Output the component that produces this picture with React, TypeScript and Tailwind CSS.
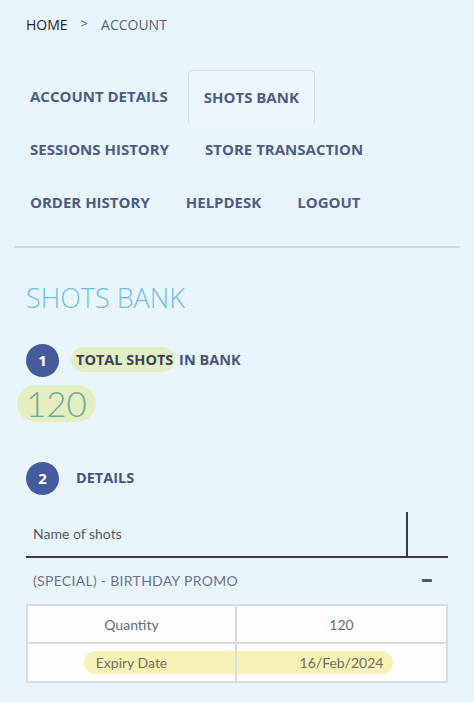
import React from 'react';

const tabs = [
  'ACCOUNT DETAILS',
  'SHOTS BANK',
  'SESSIONS HISTORY',
  'STORE TRANSACTION',
  'ORDER HISTORY',
  'HELPDESK',
  'LOGOUT',
];

const sans = { fontFamily: '"Open Sans", "Noto Sans", sans-serif' };
const geo = { fontFamily: 'Lato, "Noto Sans", sans-serif' };

function Step({ n, children }: { n: number; children: React.ReactNode }) {
  return (
    <div className="flex items-center h-[34px]">
      <div className="w-[33px] h-[33px] rounded-full bg-[#455c9c] text-white flex items-center justify-center text-[15px] font-bold">
        {n}
      </div>
      <div className="ml-[17px] text-[14.5px] font-bold text-[#46557f]">{children}</div>
    </div>
  );
}

export default function App() {
  return (
    <div className="min-h-[702px] w-[474px] bg-[#e9f5fc]" style={sans}>
      {/* breadcrumb */}
      <div className="flex items-center h-[48px] pl-[26px] text-[14px]">
        <span className="text-[#1f2329]">HOME</span>
        <span className="mx-[13px] text-[#55617f] text-[13px]">&gt;</span>
        <span className="text-[#55617f]">ACCOUNT</span>
      </div>

      {/* tabs */}
      <div className="mt-[22px] pl-[14px] pr-[14px] flex flex-wrap">
        {tabs.map((t) => (
          <div
            key={t}
            className={
              'h-[53px] px-[15px] mr-[4px] flex items-center text-[15px] font-bold text-[#4e5c86] whitespace-nowrap ' +
              (t === 'SHOTS BANK' ? 'border border-b-0 border-[#d3dbe2] rounded-t-[5px] bg-[#ecf7fd]' : 'border border-transparent')
            }
          >
            {t}
          </div>
        ))}
      </div>
      <div className="mx-[14px] mt-[17px] border-t-2 border-[#d2dbe3]" />

      {/* heading */}
      <div className="pl-[26px] mt-[32px] text-[27px] font-light text-[#72bde6] leading-[36px]">SHOTS BANK</div>

      <div className="pl-[26px] mt-[27px]">
        <Step n={1}>
          <span className="bg-[#e4eec4] rounded-full py-[3px] pl-[5px] pr-[2px] -ml-[5px] text-[#3c4356]">TOTAL SHOTS</span> IN BANK
        </Step>
      </div>
      <div className="pl-[17px] mt-[8px]">
        <span
          className="inline-block bg-[#e5eec1] rounded-full px-[9px] h-[37px] leading-[37px] text-[35px] font-light text-[#6fa99b]"
          style={geo}
        >
          120
        </span>
      </div>

      <div className="pl-[26px] mt-[38px]">
        <Step n={2}>DETAILS</Step>
      </div>

      {/* details table */}
      <div className="mx-[26px] mt-[17px]" style={geo}>
        <div className="flex h-[46px] border-b-2 border-[#3a3d44]">
          <div className="flex-1 pl-[7px] flex items-center pb-[2px] text-[14px] text-[#555a62]">Name of shots</div>
          <div className="w-[42px] border-l-2 border-[#3a3d44]" />
        </div>
        <div className="flex items-center h-[46px] pb-[2px] pl-[7px] pr-[16px] text-[14px] text-[#6b7290] tracking-[0.3px]">
          <span className="flex-1">(SPECIAL) - BIRTHDAY PROMO</span>
          <span className="w-[10px] h-[3px] bg-[#4a5680] rounded-[1px]" />
        </div>
        <div className="border-2 border-[#d9dbe0] bg-[#fdfdfe] text-[14px]">
          <div className="grid grid-cols-2 h-[38px] border-b-2 border-[#d9dbe0]">
            <div className="flex items-center justify-center text-[#636a86] border-r-2 border-[#d9dbe0]">Quantity</div>
            <div className="flex items-center justify-center text-[#636a86]">120</div>
          </div>
          <div className="relative grid grid-cols-2 h-[37px]">
            <div className="absolute left-[56px] right-[53px] top-[7px] h-[23px] rounded-full bg-[#f6f1b6]" />
            <div className="relative flex items-center justify-center text-[#72705e] border-r-2 border-[#d9dbe0]">Expiry Date</div>
            <div className="relative flex items-center justify-center text-[#72705e]">16/Feb/2024</div>
          </div>
        </div>
      </div>
    </div>
  );
}
